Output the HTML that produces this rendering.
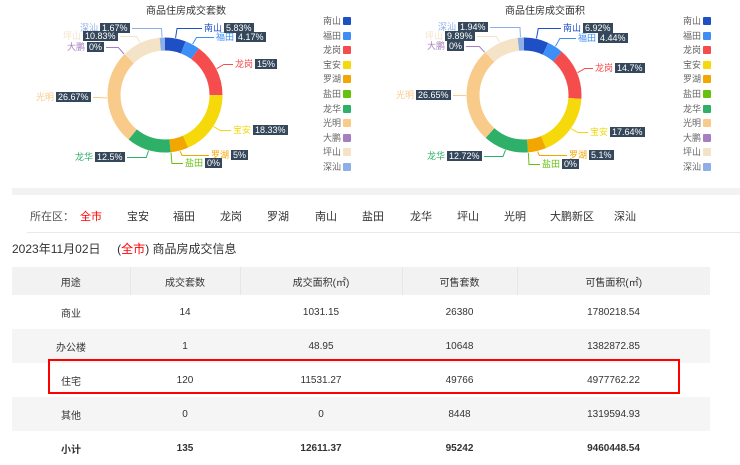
<!DOCTYPE html>
<html><head><meta charset="utf-8"><style>
*{margin:0;padding:0;box-sizing:border-box}
body{width:740px;height:462px;background:#fff;font-family:"Liberation Sans","Noto Sans CJK SC",sans-serif;color:#333;position:relative;overflow:hidden}
.a{position:absolute;white-space:nowrap}
.t{font-size:10px;color:#333}
.lg{font-size:9px;color:#666}
.sq{position:absolute;width:8px;height:8px;border-radius:1px}
.lb{font-size:9px;line-height:11px}
.bx{background:#35475a;color:#fff;padding:0 2px;font-size:9px;line-height:11px;margin-left:2px}
.f{font-size:11px;top:208px}
table{position:absolute;left:12px;top:267px;width:698px;border-collapse:collapse;font-size:10px;text-align:center;color:#333}
td,th{font-weight:normal;height:34px;padding:0}
th{background:#f2f2f2;height:28px;border-right:1px solid #e6e6e6}
th:last-child{border-right:none}
tr.g td{background:#f5f5f5}
tr.b td{font-weight:bold}
</style></head><body>
<div class="a t" style="left:146px;top:2px">商品住房成交套数</div>
<div class="a t" style="left:505px;top:2px">商品住房成交面积</div>
<svg class="a" style="left:0;top:0" width="740" height="185" id="sv"></svg>
<div id="lab"></div>
<div style="position:absolute;left:12px;top:188px;width:728px;height:7px;background:#f2f2f2"></div>
<div class="a f" style="left:30px;color:#555">所在区：</div>
<div class="a f" style="left:80px;color:#f00">全市</div>
<div class="a f" style="left:127px">宝安</div>
<div class="a f" style="left:173px">福田</div>
<div class="a f" style="left:220px">龙岗</div>
<div class="a f" style="left:267px">罗湖</div>
<div class="a f" style="left:315px">南山</div>
<div class="a f" style="left:362px">盐田</div>
<div class="a f" style="left:410px">龙华</div>
<div class="a f" style="left:457px">坪山</div>
<div class="a f" style="left:504px">光明</div>
<div class="a f" style="left:550px">大鹏新区</div>
<div class="a f" style="left:614px">深汕</div>
<div style="position:absolute;left:27px;top:232px;width:713px;height:1px;background:#e8e8e8"></div>
<div class="a" style="left:12px;top:240px;font-size:12px">2023年11月02日&nbsp;&nbsp;&nbsp;&nbsp;&nbsp;(<span style="color:#f00">全市</span>) 商品房成交信息</div>
<table>
<tr><th style="width:118px">用途</th><th style="width:110px">成交套数</th><th style="width:162px">成交面积(㎡)</th><th style="width:115px">可售套数</th><th>可售面积(㎡)</th></tr>
<tr><td>商业</td><td>14</td><td>1031.15</td><td>26380</td><td>1780218.54</td></tr>
<tr class="g"><td>办公楼</td><td>1</td><td>48.95</td><td>10648</td><td>1382872.85</td></tr>
<tr><td>住宅</td><td>120</td><td>11531.27</td><td>49766</td><td>4977762.22</td></tr>
<tr class="g"><td>其他</td><td>0</td><td>0</td><td>8448</td><td>1319594.93</td></tr>
<tr class="b"><td>小计</td><td>135</td><td>12611.37</td><td>95242</td><td>9460448.54</td></tr>
</table>
<div style="position:absolute;left:48px;top:359px;width:632px;height:35px;border:2px solid #f00"></div>
<script>
var names=["南山","福田","龙岗","宝安","罗湖","盐田","龙华","光明","大鹏","坪山","深汕"];
var cols=["#1f4fc4","#3d8ef5","#f54d4d","#f5d90a","#f2a600","#66c20f","#2fb069","#f8cb8a","#a57fc0","#f5e3c7","#8eaee6"];
var v1=[5.83,4.17,15,18.33,5,0,12.5,26.67,0,10.83,1.67];
var v2=[6.92,4.44,14.7,17.64,5.1,0,12.72,26.65,0,9.89,1.94];
var sv=document.getElementById('sv'),h='',mids={};
function ring(cx,cy,v,k){var r=51,C=2*Math.PI*r,acc=0,p=0;mids[k]=[];for(var i=0;i<v.length;i++){var l=v[i]/100*C;mids[k].push(p+v[i]/2);p+=v[i];if(l>0)h+='<circle cx="'+cx+'" cy="'+cy+'" r="'+r+'" fill="none" stroke="'+cols[i]+'" stroke-width="13" stroke-dasharray="'+l+' '+(C-l)+'" stroke-dashoffset="'+(-acc)+'" transform="rotate(-90 '+cx+' '+cy+')"/>';acc+=l;}}
ring(165,95,v1,0);ring(524,95,v2,1);
var L='';
for(var i=0;i<11;i++){var y=14+i*14.6;
L+='<div class="a lg" style="left:323px;top:'+y+'px">'+names[i]+'</div><div class="sq" style="left:343px;top:'+(y+3)+'px;background:'+cols[i]+'"></div>';
L+='<div class="a lg" style="left:683px;top:'+y+'px">'+names[i]+'</div><div class="sq" style="left:703px;top:'+(y+3)+'px;background:'+cols[i]+'"></div>';}
var lab=[
[80,23,10,"1.67%",0],[63,31,9,"10.83%",0],[67,42,8,"0%",0],[36,92,7,"26.67%",0],[75,152,6,"12.5%",0],
[204,23,0,"5.83%",0],[216,32,1,"4.17%",0],[235,59,2,"15%",0],[233,125,3,"18.33%",0],[211,150,4,"5%",0],[185,158,5,"0%",0],
[438,22,10,"1.94%",1],[425,31,9,"9.89%",1],[427,41,8,"0%",1],[396,90,7,"26.65%",1],[427,151,6,"12.72%",1],
[563,23,0,"6.92%",1],[578,33,1,"4.44%",1],[595,63,2,"14.7%",1],[590,127,3,"17.64%",1],[569,150,4,"5.1%",1],[542,159,5,"0%",1]];
lab.forEach(function(a,j){L+='<div id="l'+j+'" class="a lb" style="left:'+a[0]+'px;top:'+a[1]+'px;color:'+cols[a[2]]+'">'+names[a[2]]+'<span class="bx">'+a[3]+'</span></div>';});
document.getElementById('lab').innerHTML=L;
lab.forEach(function(a,j){
 var k=a[4],cx=k?524:165,cy=95,ang=(mids[k][a[2]]/100)*2*Math.PI-Math.PI/2;
 var x1=cx+58*Math.cos(ang),y1=cy+58*Math.sin(ang),x2=cx+66*Math.cos(ang),y2=cy+66*Math.sin(ang);
 var el=document.getElementById('l'+j),w=el.offsetWidth,ly=a[1]+5.5;
 var ex=(x2<cx)?a[0]+w+2:a[0]-2;
 h+='<polyline points="'+x1+','+y1+' '+x2+','+ly+' '+ex+','+ly+'" fill="none" stroke="'+cols[a[2]]+'" stroke-width="1"/>';
});
sv.innerHTML=h;
</script>
</body></html>
